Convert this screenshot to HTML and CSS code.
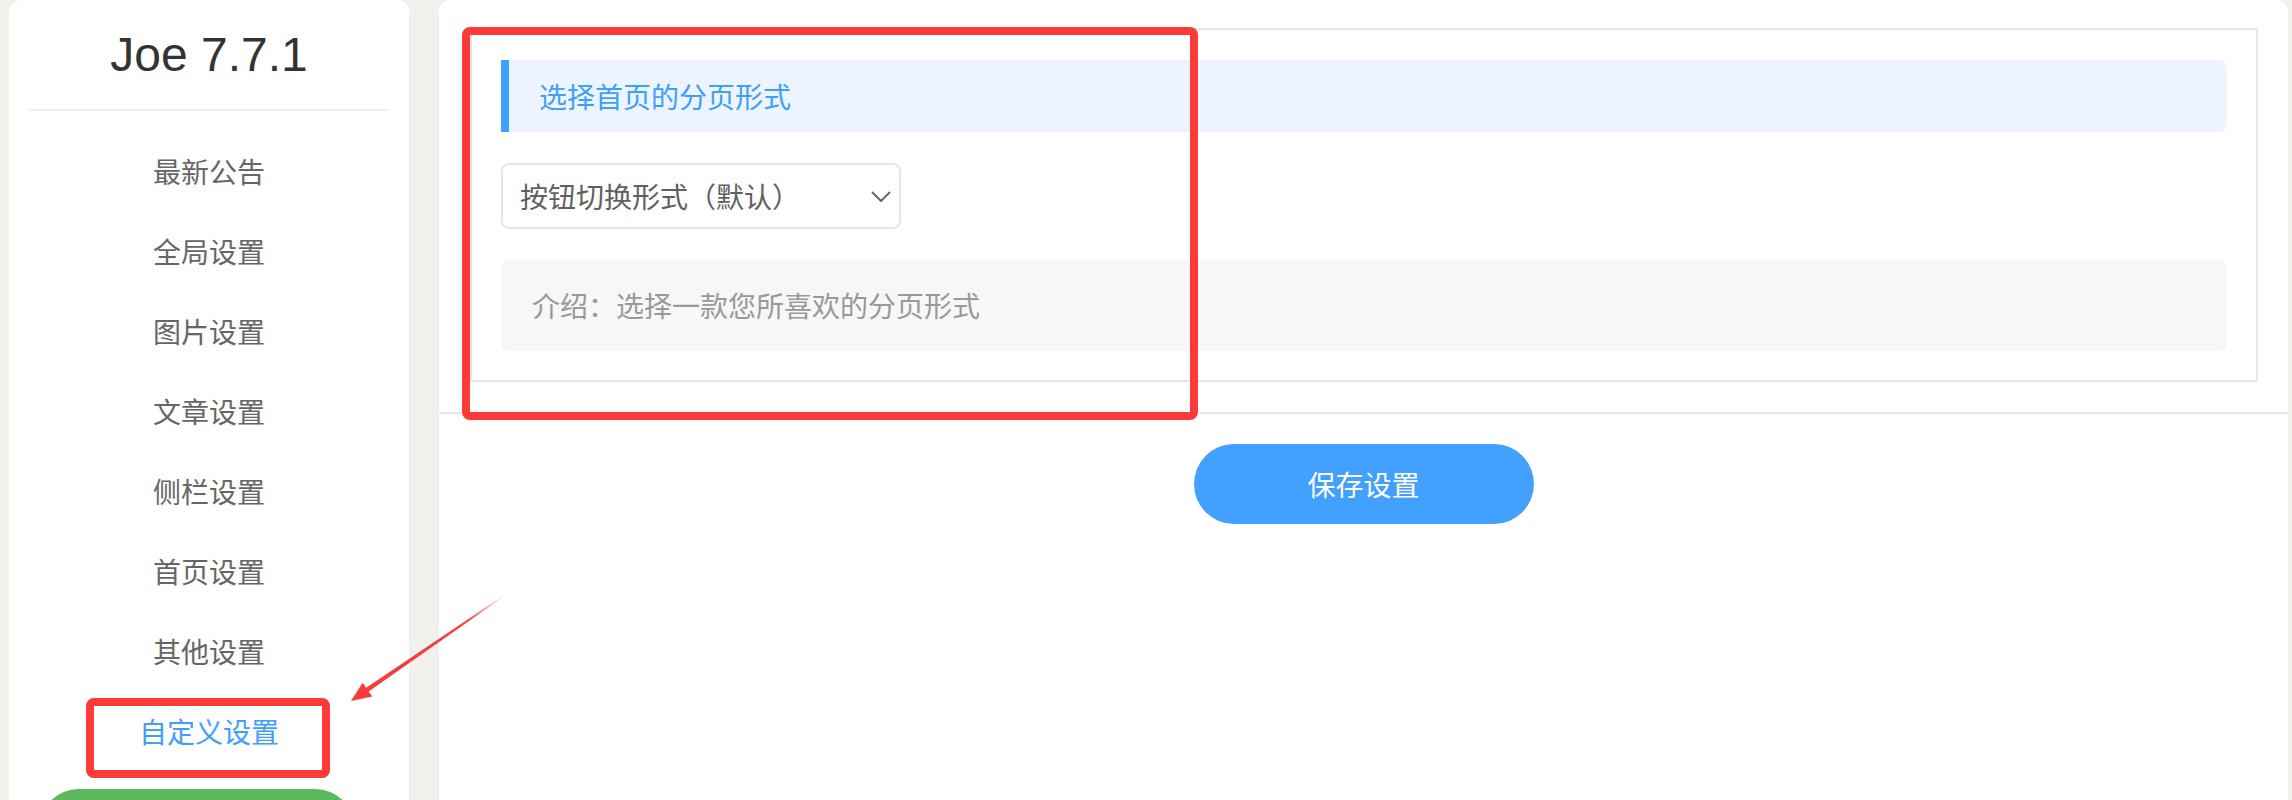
FILE: index.html
```html
<!DOCTYPE html>
<html lang="zh-CN">
<head>
<meta charset="utf-8">
<title>Joe 7.7.1 设置</title>
<link rel="stylesheet" href="styles.css">
</head>
<body>
<div class="page">
  <aside class="sidebar">
    <div class="brand">Joe 7.7.1</div>
    <nav class="menu">
      <a class="item">最新公告</a>
      <a class="item">全局设置</a>
      <a class="item">图片设置</a>
      <a class="item">文章设置</a>
      <a class="item">侧栏设置</a>
      <a class="item">首页设置</a>
      <a class="item">其他设置</a>
      <a class="item active">自定义设置</a>
    </nav>
    <div class="backup"></div>
  </aside>
  <main class="panel">
    <div class="options">
      <div class="option-title">选择首页的分页形式</div>
      <div class="select">
        <span class="select-text">按钮切换形式（默认）</span>
        <svg class="chevron" width="20" height="11" viewBox="0 0 20 11"><path d="M1 1 L10 10 L19 1" fill="none" stroke="#666" stroke-width="2"/></svg>
      </div>
      <div class="desc">介绍：选择一款您所喜欢的分页形式</div>
    </div>
    <div class="footer">
      <button class="save">保存设置</button>
    </div>
  </main>
</div>
<div class="mark mark-panel"></div>
<div class="mark mark-menu"></div>
<svg class="arrow" width="180" height="125" viewBox="0 0 180 125">
  <defs>
    <linearGradient id="fade" x1="165" y1="10" x2="11" y2="116" gradientUnits="userSpaceOnUse">
      <stop offset="0" stop-color="#fc3a3a" stop-opacity="0"/>
      <stop offset="0.25" stop-color="#fc3a3a" stop-opacity="1"/>
      <stop offset="1" stop-color="#fc3a3a"/>
    </linearGradient>
  </defs>
  <polygon fill="url(#fade)" points="164.8,9.6 165.4,10.4 28.6,106.6 32.4,111.6 11,116 22.6,97.8 26.2,102.8"/>
</svg>
</body>
</html>
```

FILE: styles.css
```css
html, body {
  margin: 0;
  padding: 0;
  background: #f0f0ed;
  height: 800px;
  overflow: hidden;
}

body {
  position: relative;
  font-family: "Noto Sans CJK SC", "Liberation Sans", sans-serif;
}

.page {
  display: flex;
  align-items: flex-start;
  gap: 30px;
  padding-left: 9px;
}

.sidebar {
  width: 400px;
  flex: none;
  background: #fff;
  border-radius: 12px 12px 0 0;
  height: 1000px;
}

.brand {
  margin: 0 20px;
  padding: 31px 0 30px;
  font-family: "Liberation Sans", Arial, sans-serif;
  font-size: 48px;
  line-height: 48px;
  color: #333;
  text-align: center;
  border-bottom: 2px solid #eceef4;
}

.menu {
  display: flex;
  flex-direction: column;
  padding-top: 20px;
}

.item {
  display: block;
  height: 80px;
  line-height: 80px;
  font-size: 28px;
  color: #666;
  text-align: center;
  text-decoration: none;
}

.item.active {
  color: #409eff;
}

.backup {
  margin: 18px 0 0 30px;
  width: 316px;
  height: 80px;
  border-radius: 40px;
  background: #5cb85c;
}

.panel {
  width: 1849px;
  flex: none;
  background: #fff;
  border-radius: 12px 12px 0 0;
  height: 1000px;
}

.options {
  margin: 28px 30px 0 31px;
  border: 2px solid #e8e8e8;
  padding: 30px 29px 29px 29px;
}

.option-title {
  height: 72px;
  line-height: 72px;
  border-left: 8px solid #409eff;
  border-radius: 0 8px 8px 0;
  background: #ecf5ff;
  color: #409eff;
  font-size: 28px;
  padding-left: 30px;
}

.select {
  margin-top: 31px;
  width: 400px;
  height: 66px;
  box-sizing: border-box;
  border: 2px solid #e6e6e6;
  border-radius: 8px;
  padding: 0 8px 0 17px;
  display: flex;
  align-items: center;
  justify-content: space-between;
  font-size: 28px;
  color: #606060;
}

.chevron {
  display: block;
}

.desc {
  margin-top: 31px;
  height: 91px;
  line-height: 91px;
  background: #f7f7f7;
  border-radius: 8px;
  padding-left: 31px;
  font-size: 28px;
  color: #999;
}

.footer {
  margin-top: 30px;
  border-top: 2px solid #e8e8e8;
  padding-top: 30px;
  display: flex;
  justify-content: center;
  background: #fff;
  height: 600px;
}

.save {
  width: 340px;
  height: 80px;
  border: none;
  border-radius: 40px;
  background: #42a0ff;
  color: #fff;
  font-family: "Noto Sans CJK SC", sans-serif;
  font-size: 28px;
  padding: 0;
}

.mark {
  position: absolute;
  box-sizing: border-box;
  border: 8px solid #fc3a3a;
  border-radius: 8px;
}

.mark-panel {
  left: 462px;
  top: 27px;
  width: 736px;
  height: 393px;
}

.mark-menu {
  left: 86px;
  top: 698px;
  width: 244px;
  height: 80px;
}

.arrow {
  position: absolute;
  left: 340px;
  top: 585px;
}
```
